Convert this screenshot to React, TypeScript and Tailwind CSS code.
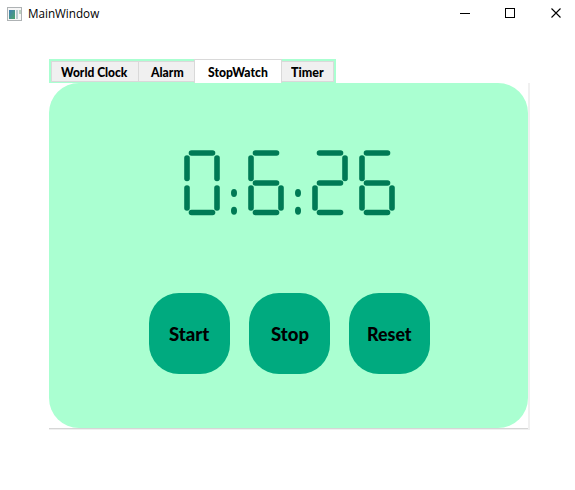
import React from "react";

type Segment = "a" | "b" | "c" | "d" | "e" | "f" | "g";

const LIT: Record<string, Segment[]> = {
  "0": ["a", "b", "c", "d", "e", "f"],
  "2": ["a", "b", "d", "e", "g"],
  "6": ["a", "c", "d", "e", "f", "g"],
};

const LINES: Record<Segment, [number, number, number, number]> = {
  a: [7.5, 3, 28.5, 3],
  b: [33, 8, 33, 28.5],
  c: [33, 38, 33, 58],
  d: [7.5, 62.5, 28.5, 62.5],
  e: [3, 38, 3, 58],
  f: [3, 8, 3, 28.5],
  g: [7.5, 33, 28.5, 33],
};

function Digit({ value }: { value: string }) {
  return (
    <svg width="36" height="66" viewBox="0 0 36 66" stroke="#007a55" strokeWidth="5.6" strokeLinecap="round">
      {LIT[value].map((s) => {
        const [x1, y1, x2, y2] = LINES[s];
        return <line key={s} x1={x1} y1={y1} x2={x2} y2={y2} />;
      })}
    </svg>
  );
}

function Colon() {
  return (
    <svg width="6" height="66" viewBox="0 0 6 66" fill="#007a55">
      <ellipse cx="3" cy="43" rx="3" ry="4" />
      <ellipse cx="3" cy="60.8" rx="3" ry="4" />
    </svg>
  );
}

function Label({ text, width, className }: { text: string; width: number; className: string }) {
  const ref = React.useRef<HTMLSpanElement>(null);
  const [scale, setScale] = React.useState(1);
  React.useLayoutEffect(() => {
    if (ref.current) setScale(width / ref.current.offsetWidth);
  }, [width]);
  return (
    <span
      ref={ref}
      className={`inline-block shrink-0 origin-left whitespace-nowrap ${className}`}
      style={{ transform: `scaleX(${scale})` }}
    >
      {text}
    </span>
  );
}

const TAB_TEXT = "font-['Lato'] text-[14px] leading-[18px] font-black";
const BUTTON_TEXT = "font-['Lato'] text-[19px] leading-6 font-black";

function RoundButton({ text, width, pad }: { text: string; width: number; pad: string }) {
  return (
    <button className={`flex h-[81px] w-[81px] items-center rounded-[30px] bg-[#00aa7f] text-left text-black ${pad}`}>
      <Label text={text} width={width} className={BUTTON_TEXT} />
    </button>
  );
}

export default function App() {
  return (
    <div className="h-[490px] w-[575px] overflow-hidden bg-white font-['Open_Sans',sans-serif] text-black">
      <header className="flex h-[59px] items-start">
        <div className="flex h-[27px] w-[450px] items-center pl-[7px]">
          <svg width="16" height="14" viewBox="0 0 16 14" shapeRendering="crispEdges">
            <defs>
              <linearGradient id="pane" x2="1" y2="1">
                <stop stopColor="#3f7fb5" />
                <stop offset="1" stopColor="#4ba66a" />
              </linearGradient>
            </defs>
            <rect x=".5" y=".5" width="14" height="13" fill="#f6f6f6" stroke="#aeb2b4" />
            <rect x="2" y="3" width="6" height="9" fill="url(#pane)" />
            <rect x="9" y="3" width="2" height="9" fill="#b9cbd0" />
            <rect x="12" y="3" width="2" height="4" fill="#b9d0c0" />
          </svg>
          <div className="flex pl-[5px]">
            <Label text="MainWindow" width={71} className="text-[12px] leading-[18px]" />
          </div>
        </div>
        <svg width="125" height="27" viewBox="0 0 125 27" fill="none" stroke="#000">
          <path d="M10 13.5h10M55.5 8.5h9v9h-9z" shapeRendering="crispEdges" />
          <path d="M101.5 8.5l9 9M110.5 8.5l-9 9" strokeWidth="1.1" />
        </svg>
      </header>
      <main className="pl-[49px]">
        <nav className="flex h-6 w-[287px] items-end bg-[#aaffd1] pl-[2px]">
          <div className="mb-px flex h-[21px] w-[88px] items-center border border-[#d9d9d9] bg-[#f0f0f0] pl-[9px]">
            <Label text="World Clock" width={66} className={TAB_TEXT} />
          </div>
          <div className="mb-px flex h-[21px] w-[55px] items-center border-y border-[#d9d9d9] bg-[#f0f0f0] pl-[12px]">
            <Label text="Alarm" width={33} className={TAB_TEXT} />
          </div>
          <div className="flex h-6 w-[88px] items-center border border-b-0 border-[#d9d9d9] bg-white pl-[13px]">
            <Label text="StopWatch" width={60} className={TAB_TEXT} />
          </div>
          <div className="mb-px flex h-[21px] w-[52px] items-center border border-l-0 border-[#d9d9d9] bg-[#f0f0f0] pl-[9px]">
            <Label text="Timer" width={33} className={TAB_TEXT} />
          </div>
        </nav>
        <div className="h-[347px] w-[481px] border-r-2 border-b border-r-[#f0f0f0] border-b-[#f0f0f0]">
          <div className="h-[346px] w-[479px] border-b border-[#d6d6d6]">
            <section className="h-[345px] w-[479px] rounded-[30px] bg-[#aaffd1] pt-[67px]">
              <div className="flex h-[66px] pl-[135px]">
                <Digit value="0" />
                <div className="pl-[11px] pr-[11px]"><Colon /></div>
                <Digit value="6" />
                <div className="pl-[11px] pr-[11px]"><Colon /></div>
                <Digit value="2" />
                <div className="w-[11px]" />
                <Digit value="6" />
              </div>
              <div className="flex gap-[19px] pl-[100px] pt-[77px]">
                <RoundButton text="Start" width={40} pad="pl-5" />
                <RoundButton text="Stop" width={38} pad="pl-[22px]" />
                <RoundButton text="Reset" width={45} pad="pl-[18px]" />
              </div>
            </section>
          </div>
        </div>
      </main>
    </div>
  );
}
